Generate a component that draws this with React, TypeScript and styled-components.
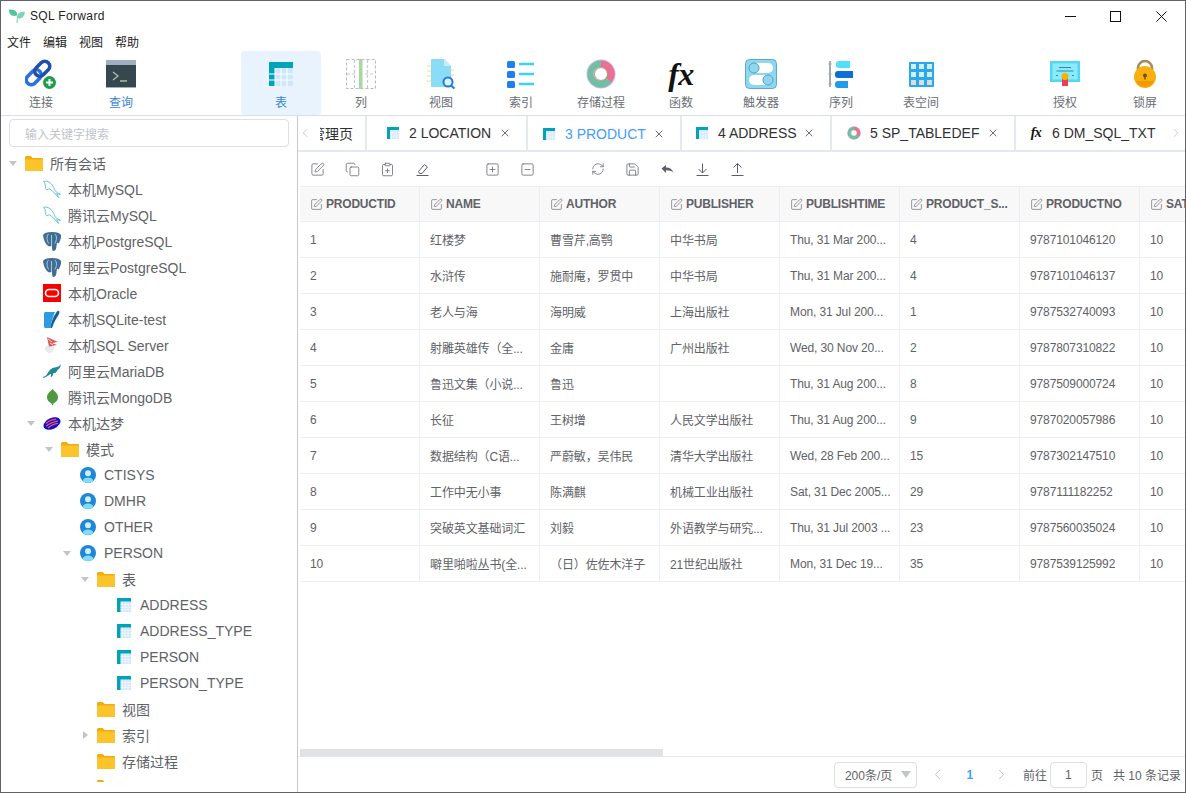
import React from "react";
import styled, { createGlobalStyle } from "styled-components";
import {
  ChevronLeft,
  ChevronRight,
  ClipboardPlus,
  Copy,
  RefreshCw,
  Save,
  SquareMinus,
  SquarePen,
  SquarePlus,
  X,
} from "lucide-react";

const GlobalStyle = createGlobalStyle`
  html, body {
    margin: 0;
    padding: 0;
    background: #fff;
  }
  body {
    font-family: "Liberation Sans", "Noto Sans CJK SC", sans-serif;
  }
  * {
    box-sizing: border-box;
  }
`;

const Window = styled.div`
  width: 1186px;
  height: 793px;
  display: flex;
  flex-direction: column;
  background: #fff;
  border: 1px solid #5f6368;
  overflow: hidden;
`;

const TitleBar = styled.div`
  height: 30px;
  flex: none;
  display: flex;
  align-items: center;
  padding-left: 8px;
`;

const AppName = styled.div`
  margin-left: 5px;
  font-size: 12px;
  letter-spacing: 0.35px;
  color: #222;
`;

const WinControls = styled.div`
  margin-left: auto;
  display: flex;
  height: 100%;
  padding-right: 1px;
`;

const WinButton = styled.div`
  width: 45.5px;
  display: flex;
  align-items: center;
  justify-content: center;
`;

const MenuBar = styled.div`
  height: 20px;
  flex: none;
  display: flex;
  align-items: center;
  gap: 12px;
  padding-left: 6px;
  font-size: 12px;
  color: #222;
`;

const Ribbon = styled.div`
  height: 65px;
  flex: none;
  display: flex;
  border-bottom: 1px solid #dcdfe6;
`;

const RibbonGroup = styled.div<{ $gap?: number }>`
  display: flex;
  margin-left: ${(p) => p.$gap || 0}px;
`;

const RibbonItem = styled.div<{ $active?: boolean; $blue?: boolean }>`
  width: 80px;
  height: 64px;
  display: flex;
  flex-direction: column;
  align-items: center;
  border-radius: 4px;
  padding-top: 7px;
  font-size: 12px;
  color: ${(p) => (p.$active || p.$blue ? "#3a86d0" : "#6a6d73")};
  background: ${(p) => (p.$active ? "#e8f3fd" : "transparent")};
`;

const RibbonIcon = styled.div`
  height: 32px;
  width: 32px;
  display: flex;
  align-items: center;
  justify-content: center;
`;

const RibbonLabel = styled.div`
  margin-top: 5px;
  line-height: 16px;
`;

const FxMark = styled.span<{ $size: number }>`
  font-family: "Liberation Serif", serif;
  font-style: italic;
  font-weight: 700;
  font-size: ${(p) => p.$size}px;
  line-height: 1;
  color: #111;
  letter-spacing: -0.5px;
`;

const Body = styled.div`
  flex: 1;
  min-height: 0;
  display: flex;
`;

const Sidebar = styled.div`
  width: 297px;
  flex: none;
  border-right: 1px solid #c8cacd;
  display: flex;
  flex-direction: column;
`;

const SearchWrap = styled.div`
  padding: 3px 8px 3px 8px;
  flex: none;
`;

const SearchBox = styled.div`
  height: 28px;
  border: 1px solid #dcdfe6;
  border-radius: 4px;
  padding-left: 15px;
  display: flex;
  align-items: center;
  font-size: 12px;
  color: #c0c4cc;
`;

const Tree = styled.div`
  height: 632px;
  flex: none;
  overflow: hidden;
`;

const TreeRow = styled.div<{ $level: number }>`
  height: 26px;
  display: flex;
  align-items: center;
  padding-left: ${(p) => p.$level * 18 + 7}px;
  font-size: 14px;
  color: #606266;
  white-space: nowrap;
`;

const Caret = styled.div<{ $open?: boolean; $show: boolean }>`
  width: 10px;
  height: 10px;
  flex: none;
  margin-right: 7px;
  display: flex;
  align-items: center;
  justify-content: center;
  &::before {
    content: "";
    display: ${(p) => (p.$show ? "block" : "none")};
    border-style: solid;
    border-color: transparent;
    ${(p) =>
      p.$open
        ? "border-width: 5px 4.5px 0 4.5px; border-top-color: #c0c4cc;"
        : "border-width: 4.5px 0 4.5px 5px; border-left-color: #c0c4cc;"}
  }
`;

const TreeIcon = styled.div`
  width: 18px;
  height: 18px;
  flex: none;
  margin-right: 7px;
  display: flex;
  align-items: center;
  justify-content: center;
`;

const Main = styled.div`
  flex: 1;
  min-width: 0;
  display: flex;
  flex-direction: column;
`;

const TabStrip = styled.div`
  height: 36px;
  flex: none;
  display: flex;
  border-bottom: 2px solid #e4e8ef;
`;

const TabArrow = styled.div<{ $w: number }>`
  width: ${(p) => p.$w}px;
  flex: none;
  display: flex;
  align-items: center;
  color: #b4b7bd;
`;

const TabList = styled.div`
  flex: 1;
  min-width: 0;
  display: flex;
  overflow: hidden;
`;

const Tab = styled.div<{ $w: number; $pad?: number; $active?: boolean }>`
  width: ${(p) => p.$w}px;
  height: ${(p) => (p.$active ? 36 : 34)}px;
  flex: none;
  display: flex;
  align-items: center;
  padding-left: ${(p) => p.$pad ?? 15}px;
  border-right: 2px solid #e4e8ef;
  background: #fff;
  font-size: 14px;
  white-space: nowrap;
  color: ${(p) => (p.$active ? "#409eff" : "#303133")};
`;

const ClippedTab = styled(Tab)`
  justify-content: flex-end;
  padding: 0 12px 0 0;
  overflow: hidden;
`;

const TabIcon = styled.div`
  width: 14px;
  margin-right: 9px;
  flex: none;
  display: flex;
  align-items: center;
  justify-content: center;
`;

const TabClose = styled.div`
  margin-left: auto;
  margin-right: 15px;
  display: flex;
  color: #303133;
`;

const Toolbar = styled.div`
  height: 34px;
  flex: none;
  display: flex;
  gap: 35px;
  padding-left: 2px;
`;

const ToolGroup = styled.div`
  display: flex;
`;

const ToolButton = styled.div`
  width: 35px;
  display: flex;
  align-items: center;
  justify-content: center;
  color: #5c5f65;
`;

const TableWrap = styled.div`
  flex: 1;
  min-height: 0;
  overflow: hidden;
  padding-left: 2px;
`;

const Grid = styled.div`
  display: flex;
  flex-direction: column;
  width: max-content;
`;

const Row = styled.div<{ $head?: boolean }>`
  height: 36px;
  display: flex;
  border-bottom: 1px solid #ebeef5;
  background: ${(p) => (p.$head ? "#f8f8f9" : "#fff")};
  border-top: ${(p) => (p.$head ? "1px solid #ebeef5" : "none")};
`;

const Cell = styled.div<{ $head?: boolean }>`
  width: 120px;
  flex: none;
  display: flex;
  align-items: center;
  gap: 3px;
  padding-left: 10px;
  border-right: 1px solid #ebeef5;
  font-size: 12px;
  letter-spacing: ${(p) => (p.$head ? "-0.2px" : "-0.12px")};
  font-weight: ${(p) => (p.$head ? 700 : 400)};
  color: #606266;
  white-space: nowrap;
  overflow: hidden;
`;

const ScrollTrack = styled.div`
  height: 7px;
  flex: none;
  padding-left: 2px;
`;

const ScrollThumb = styled.div`
  width: 363px;
  height: 7px;
  background: #e1e2e4;
`;

const Footer = styled.div`
  height: 36px;
  flex: none;
  border-top: 1px solid #e4e7ed;
  display: flex;
  align-items: center;
  padding-right: 4px;
  justify-content: flex-end;
  font-size: 12px;
  color: #606266;
`;

const PageSize = styled.div`
  width: 83px;
  height: 26px;
  border: 1px solid #dcdfe6;
  border-radius: 4px;
  display: flex;
  align-items: center;
  padding-left: 10px;
  margin-right: 5px;
`;

const SelectCaret = styled.div`
  margin-left: 9px;
  border-style: solid;
  border-width: 7px 5.5px 0 5.5px;
  border-color: #c0c4cc transparent transparent transparent;
`;

const PageArrow = styled.div`
  width: 32px;
  display: flex;
  justify-content: center;
  color: #b4b7bd;
`;

const PageCurrent = styled.div`
  width: 32px;
  text-align: center;
  font-weight: 700;
  color: #409eff;
`;

const PageInput = styled.div`
  width: 37px;
  height: 26px;
  margin: 0 4px 0 3px;
  border: 1px solid #dcdfe6;
  border-radius: 4px;
  display: flex;
  align-items: center;
  justify-content: center;
`;

const FooterText = styled.span<{ $left?: number }>`
  margin-left: ${(p) => p.$left || 0}px;
`;

const Leaf = () => (
  <svg width="16" height="14" viewBox="0 0 16 14">
    <path d="M8 6.500C5.500 7.500 2.500 7 1 5 .2 3.800 0 2 .2 .5 3 .2 6 .8 7.500 3 8 4 8.200 5 8 6.500z" fill="#54c49a" />
    <path d="M8 8c0-3 2.500-5 6-5.200.6 0 1.300 0 1.800.1 0 3.100-1.300 5.600-4 6.300-1 .3-2 .3-3 0L8.600 14H7.400z" fill="#7ed6b5" />
  </svg>
);

const LinkIcon = () => (
  <svg width="32" height="32" viewBox="0 0 32 32">
    <g transform="rotate(-45 13 15)" fill="none" strokeWidth="3.6">
      <rect x="-1.500" y="10" width="17" height="10" rx="5" stroke="#2b6fe0" />
      <rect x="10.500" y="10" width="17" height="10" rx="5" stroke="#1f4fa8" />
    </g>
    <circle cx="24.500" cy="24.500" r="6.500" fill="#1f9d4a" />
    <path d="M24.500 21v7M21 24.500h7" stroke="#fff" strokeWidth="2" />
  </svg>
);

const TerminalIcon = () => (
  <svg width="30" height="28" viewBox="0 0 30 28">
    <rect x="0" y="0" width="30" height="28" fill="#9eb0c0" />
    <rect x="0" y="5" width="30" height="22" fill="#37474f" />
    <path d="M7 12l5 4-5 4" fill="none" stroke="#a9c0a8" strokeWidth="1.300" />
    <path d="M14 21h7" stroke="#a9c0a8" strokeWidth="1.500" />
  </svg>
);

const TableIcon = ({ size }: { size: number }) => (
  <svg width={size} height={size} viewBox="0 0 24 24">
    <rect x="0" y="0" width="24" height="24" fill="#cfe6fb" />
    <path d="M0 0h24v6H6v18H0z" fill="#00a3b8" />
    {size > 18 && (
      <path d="M0 12h6M0 18h6M6 6v18M12 6v18M18 6v18M6 12h18M6 18h18" stroke="#fff" strokeWidth="1" />
    )}
    {size <= 18 && <path d="M9 6v18M14 6v18M19 6v18M6 11h18M6 16h18M6 20h18" stroke="#fff" strokeWidth="1" />}
  </svg>
);

const ColumnIcon = () => (
  <svg width="30" height="30" viewBox="0 0 30 30">
    <rect x=".5" y=".5" width="29" height="29" fill="none" stroke="#b4bcc8" strokeWidth="1.200" strokeDasharray="3 2" />
    <path d="M8.500 1v28M21.500 1v28M1 15h10M19 15h10" stroke="#c4cad3" strokeWidth="1.200" strokeDasharray="3 2" />
    <rect x="13" y="0" width="3.500" height="30" fill="#a8d8a0" />
  </svg>
);

const ViewIcon = () => (
  <svg width="32" height="32" viewBox="0 0 32 32">
    <path d="M2 8h4M2 13h4M2 18h4M2 23h4M26 12h3M26 17h3" stroke="#f7eec4" strokeWidth="2" />
    <path d="M6 1h13l7 7v21H6z" fill="#8bdcf7" />
    <path d="M19 1l7 7h-7z" fill="#c4eefc" />
    <circle cx="23" cy="24" r="4.500" fill="#dff3fc" stroke="#1e80d8" strokeWidth="2" />
    <path d="M26 27.500l3.500 3" stroke="#1e80d8" strokeWidth="2.200" />
  </svg>
);

const IndexIcon = () => (
  <svg width="28" height="28" viewBox="0 0 28 28">
    <rect x="0" y="1" width="8" height="7" rx="1.500" fill="#1e80f0" />
    <rect x="0" y="11" width="8" height="7" rx="1.500" fill="#1e80f0" />
    <rect x="0" y="21" width="8" height="7" rx="1.500" fill="#1e80f0" />
    <path d="M12 4h15M12 14h15M12 24h15" stroke="#3fd0f5" strokeWidth="2.600" />
  </svg>
);

const ProcIcon = ({ size }: { size: number }) => (
  <svg width={size} height={size} viewBox="0 0 30 30">
    <circle cx="15" cy="15" r="14.500" fill="#c8b8d8" />
    <path d="M15 1.500A13.500 13.500 0 0 1 25.500 23.500L20 19A7 7 0 0 0 15 8z" fill="#ec6f95" />
    <path d="M25.500 23.500A13.500 13.500 0 1 1 15 1.500V8A7 7 0 1 0 20 19z" fill="#6fbfa4" />
    <circle cx="15" cy="15" r="6" fill="#fff" />
    <circle cx="15" cy="15" r="6.500" fill="none" stroke="#b8a04a" strokeWidth=".6" />
  </svg>
);

const TriggerIcon = () => (
  <svg width="32" height="30" viewBox="0 0 32 30">
    <rect x=".5" y=".5" width="31" height="29" rx="4" fill="#8fd6ef" stroke="#5aa9d0" />
    <rect x="4" y="4" width="24" height="10" rx="5" fill="#fff" />
    <circle cx="9" cy="9" r="5" fill="#8fd6ef" stroke="#4f9fcb" />
    <rect x="4" y="16" width="24" height="10" rx="5" fill="#fff" />
    <circle cx="23" cy="21" r="5" fill="#8fd6ef" stroke="#4f9fcb" />
  </svg>
);

const SequenceIcon = () => (
  <svg width="26" height="28" viewBox="0 0 26 28">
    <path d="M2 1v26" stroke="#a4aab3" strokeWidth="2" />
    <circle cx="2" cy="4" r="1.500" fill="#a4aab3" />
    <circle cx="2" cy="14" r="1.500" fill="#a4aab3" />
    <circle cx="2" cy="24" r="1.500" fill="#a4aab3" />
    <path d="M8 4a3 3 0 0 1 3-3h11v7H11a3 3 0 0 1-3-3z" fill="#4fe0fa" />
    <path d="M7 14a3 3 0 0 1 3-3h15v7H10a3 3 0 0 1-3-3z" fill="#0a6fd6" />
    <path d="M7 24a3 3 0 0 1 3-3h10v7H10a3 3 0 0 1-3-3z" fill="#1f9de8" />
  </svg>
);

const SpaceIcon = () => (
  <svg width="25" height="25" viewBox="0 0 25 25">
    <rect width="25" height="25" rx="1" fill="#29a8ea" />
    <path d="M2 2h5v5H2zM10 2h5v5h-5zM18 2h5v5h-5zM2 10h5v5H2zM10 10h5v5h-5zM18 10h5v5h-5z" fill="#d3effc" />
    <path d="M2 18h5v5H2zM10 18h5v5h-5zM18 18h5v5h-5z" fill="#dcdcdc" />
  </svg>
);

const GrantIcon = () => (
  <svg width="30" height="26" viewBox="0 0 30 26">
    <rect width="30" height="21" fill="#4fdaf2" />
    <rect x="2.500" y="2.500" width="25" height="16" fill="#8eeafa" />
    <path d="M9 6.500h12M6.500 10h17" stroke="#1e8fc4" strokeWidth="1.200" />
    <rect x="12" y="16" width="6" height="9" fill="#f03a5c" />
    <circle cx="15" cy="15.500" r="3.500" fill="#f5b400" />
    <path d="M6 14.500h2M22 14.500h2" stroke="#1e8fc4" strokeWidth="1.200" />
  </svg>
);

const LockIcon = () => (
  <svg width="24" height="30" viewBox="0 0 24 30">
    <path d="M5 14V9a7 7 0 0 1 14 0v5" fill="none" stroke="#a88a5c" strokeWidth="2.600" />
    <circle cx="12" cy="18" r="11" fill="#f7b010" />
    <path d="M3 22a10 10 0 0 0 18 0z" fill="#ed9a00" />
    <circle cx="12" cy="16.500" r="2" fill="#7a4a00" />
    <path d="M11.300 17h1.400v3.500h-1.400z" fill="#7a4a00" />
  </svg>
);

const Folder = () => (
  <svg width="18" height="15" viewBox="0 0 18 15">
    <path d="M0 1.500C0 .7.700 0 1.500 0h4.300l1.700 2H17c.6 0 1 .4 1 1v11c0 .6-.4 1-1 1H1c-.6 0-1-.4-1-1z" fill="#f6ab0c" />
    <path d="M0 3.500h18V14c0 .6-.4 1-1 1H1c-.6 0-1-.4-1-1z" fill="#fcc42b" />
  </svg>
);

const MysqlIcon = () => (
  <svg width="19" height="19" viewBox="0 0 19 19" fill="none" stroke="#5dc0da" strokeWidth="1">
    <path d="M.5 .8c3.500-.8 6.500 .7 8.500 3 2 2.400 2.700 5 4 7 1 1.600 3 2.700 5.500 3.700-1.700 .1-3 0-4.300-.6.800 1 1.700 2.500 2.200 4-1.700-1.300-3-3.200-4.300-4.600-1.800-2-3.300-3.500-5.400-4.600-1.200.2-2 .8-2.800 1.300C1.500 7.500 3.300 6 2 3z" />
  </svg>
);

const PostgresIcon = () => (
  <svg width="18" height="19" viewBox="0 0 18 19">
    <path d="M0 3C1 1 4 0 9 0s8 1 9 3c.5 3-1 6-2.500 8.500L14 10.500 13.500 14c0 2.500-1 5-3 5-1.200 0-1.500-2-1.500-5-2 .5-3.500 .5-4.500-.5C2.500 11.500 .5 8 0 3z" fill="#3e6d95" />
    <path d="M5.500 2c-2 2-2 6 .2 9.500M12 2c2 2 2 6-.2 9.500M8.500 3v11" stroke="#cfdce8" strokeWidth=".8" fill="none" />
  </svg>
);

const OracleIcon = () => (
  <svg width="18" height="18" viewBox="0 0 18 18">
    <rect width="18" height="18" fill="#f80000" />
    <rect x="2.500" y="5.500" width="13" height="7" rx="3.500" fill="none" stroke="#fff" strokeWidth="1.600" />
  </svg>
);

const SqliteIcon = () => (
  <svg width="18" height="19" viewBox="0 0 18 19">
    <path d="M1 3.500C1 2.700 1.700 2 2.500 2H12C10 7 8 12 7.500 18H2.500C1.700 18 1 17.300 1 16.500z" fill="#2d9be0" />
    <path d="M16 1c1.500 1-1 5-3 8-1.500 2.500-3 6-4 9H7.500C8 13 10 7 13 3c1-1.500 2-2.500 3-2z" fill="#0f5f96" />
  </svg>
);

const MssqlIcon = () => (
  <svg width="18" height="18" viewBox="0 0 18 18">
    <path d="M2 12c0-2 2-2.500 5-2.500s5 1 4 3.500-3 5-5.500 4-3.500-3-3.500-5z" fill="#e8eaec" />
    <path d="M4 1l11 5-6 1 5 2-8 1.500z" fill="#d85a5a" />
    <path d="M5 3l4 3M7 7l3 2" stroke="#fff" strokeWidth=".7" />
  </svg>
);

const MariaIcon = () => (
  <svg width="18" height="14" viewBox="0 0 18 14">
    <path d="M0 13c3-.5 4-2.500 6-6 2-3 5-3.500 8-4 1.500-.3 3-1.300 4-3-.3 3-1.500 5-3.500 6-1 2.500-2.500 3.500-4.500 3.500 0 2-.5 3.500-2.500 3.500 .7-1 .8-2 .3-3.200C5.500 11.500 3 13.500 0 14z" fill="#1f8a94" />
  </svg>
);

const MongoIcon = () => (
  <svg width="11" height="18" viewBox="0 0 12 18">
    <path d="M6 0c2 3 6 5 6 9s-3 6-5 7l-.5 2h-1L5 16c-2-1-5-3-5-7s4-6 6-9z" fill="#4d9a3f" />
  </svg>
);

const DamengIcon = () => (
  <svg width="19" height="15" viewBox="0 0 18 14">
    <g transform="rotate(-25 9 7)">
      <ellipse cx="9" cy="7" rx="9" ry="5.500" fill="#0a10d0" />
      <path d="M3.500 4.500c3-1 8-1 11 .5M2.500 7c3-1 10-1 13 .5M3.500 9.500c3-1 8-1 11 0" stroke="#f2506a" strokeWidth="1.300" fill="none" />
    </g>
  </svg>
);

const UserIcon = () => (
  <svg width="16" height="16" viewBox="0 0 16 16">
    <circle cx="8" cy="8" r="8" fill="#1f86d8" />
    <path d="M2.500 13.800C3.500 11.500 5.500 10.500 8 10.500s4.500 1 5.500 3.300A8 8 0 0 1 8 16a8 8 0 0 1-5.500-2.200z" fill="#7fdcf8" />
    <circle cx="8" cy="6.300" r="3" fill="#cdeefc" />
  </svg>
);

const EraserIcon = () => (
  <svg width="15" height="15" viewBox="0 0 15 15" fill="none" stroke="currentColor" strokeWidth="1">
    <path d="M3.500 9.500L9.500 2.500l3 2.500-5.500 6.500H4.500z" />
    <path d="M1.500 13.500h12" />
  </svg>
);

const UndoIcon = () => (
  <svg width="15" height="15" viewBox="0 0 15 15" fill="currentColor">
    <path d="M1.500 6.500L6 3v2.500c3.800 0 6.300 1.900 7.500 5-1.700-1.500-4-2.200-7.500-2.200V11z" />
  </svg>
);

const DownloadIcon = () => (
  <svg width="15" height="15" viewBox="0 0 15 15" fill="none" stroke="currentColor" strokeWidth="1">
    <path d="M7.500 1.500v9.500M3.500 7l4 4 4-4M1.500 13.500h12" />
  </svg>
);

const UploadIcon = () => (
  <svg width="15" height="15" viewBox="0 0 15 15" fill="none" stroke="currentColor" strokeWidth="1">
    <path d="M7.500 11V1.500M3.500 5.500l4-4 4 4M1.500 13.500h12" />
  </svg>
);

type TreeItem = {
  level: number;
  label: string;
  icon: React.ReactNode;
  caret?: "open" | "closed";
};

const treeItems: TreeItem[] = [
  { level: 0, label: "所有会话", icon: <Folder />, caret: "open" },
  { level: 1, label: "本机MySQL", icon: <MysqlIcon /> },
  { level: 1, label: "腾讯云MySQL", icon: <MysqlIcon /> },
  { level: 1, label: "本机PostgreSQL", icon: <PostgresIcon /> },
  { level: 1, label: "阿里云PostgreSQL", icon: <PostgresIcon /> },
  { level: 1, label: "本机Oracle", icon: <OracleIcon /> },
  { level: 1, label: "本机SQLite-test", icon: <SqliteIcon /> },
  { level: 1, label: "本机SQL Server", icon: <MssqlIcon /> },
  { level: 1, label: "阿里云MariaDB", icon: <MariaIcon /> },
  { level: 1, label: "腾讯云MongoDB", icon: <MongoIcon /> },
  { level: 1, label: "本机达梦", icon: <DamengIcon />, caret: "open" },
  { level: 2, label: "模式", icon: <Folder />, caret: "open" },
  { level: 3, label: "CTISYS", icon: <UserIcon /> },
  { level: 3, label: "DMHR", icon: <UserIcon /> },
  { level: 3, label: "OTHER", icon: <UserIcon /> },
  { level: 3, label: "PERSON", icon: <UserIcon />, caret: "open" },
  { level: 4, label: "表", icon: <Folder />, caret: "open" },
  { level: 5, label: "ADDRESS", icon: <TableIcon size={14} /> },
  { level: 5, label: "ADDRESS_TYPE", icon: <TableIcon size={14} /> },
  { level: 5, label: "PERSON", icon: <TableIcon size={14} /> },
  { level: 5, label: "PERSON_TYPE", icon: <TableIcon size={14} /> },
  { level: 4, label: "视图", icon: <Folder /> },
  { level: 4, label: "索引", icon: <Folder />, caret: "closed" },
  { level: 4, label: "存储过程", icon: <Folder /> },
  { level: 4, label: "", icon: <Folder /> },
];

const columns = [
  "PRODUCTID",
  "NAME",
  "AUTHOR",
  "PUBLISHER",
  "PUBLISHTIME",
  "PRODUCT_S...",
  "PRODUCTNO",
  "SATISFY",
];

const rows = [
  ["1", "红楼梦", "曹雪芹,高鹗", "中华书局", "Thu, 31 Mar 200...", "4", "9787101046120", "10"],
  ["2", "水浒传", "施耐庵，罗贯中", "中华书局", "Thu, 31 Mar 200...", "4", "9787101046137", "10"],
  ["3", "老人与海", "海明威", "上海出版社", "Mon, 31 Jul 200...", "1", "9787532740093", "10"],
  ["4", "射雕英雄传（全...", "金庸", "广州出版社", "Wed, 30 Nov 20...", "2", "9787807310822", "10"],
  ["5", "鲁迅文集（小说...", "鲁迅", "", "Thu, 31 Aug 200...", "8", "9787509000724", "10"],
  ["6", "长征", "王树增", "人民文学出版社", "Thu, 31 Aug 200...", "9", "9787020057986", "10"],
  ["7", "数据结构（C语...", "严蔚敏，吴伟民", "清华大学出版社", "Wed, 28 Feb 200...", "15", "9787302147510", "10"],
  ["8", "工作中无小事", "陈满麒", "机械工业出版社", "Sat, 31 Dec 2005...", "29", "9787111182252", "10"],
  ["9", "突破英文基础词汇", "刘毅", "外语教学与研究...", "Thu, 31 Jul 2003 ...", "23", "9787560035024", "10"],
  ["10", "噼里啪啦丛书(全...", "（日）佐佐木洋子", "21世纪出版社", "Mon, 31 Dec 19...", "35", "9787539125992", "10"],
];

const tabs = [
  { label: "2 LOCATION", w: 161, pad: 19, icon: <TableIcon size={12} /> },
  { label: "3 PRODUCT", w: 154, pad: 14, icon: <TableIcon size={12} />, active: true },
  { label: "4 ADDRESS", w: 150, pad: 13, icon: <TableIcon size={12} /> },
  { label: "5 SP_TABLEDEF", w: 184, pad: 15, icon: <ProcIcon size={14} /> },
  { label: "6 DM_SQL_TXT", w: 170, pad: 13, icon: <FxMark $size={14}>fx</FxMark>, noClose: true },
];

export default function App() {
  return (
    <Window>
      <GlobalStyle />
      <TitleBar>
        <Leaf />
        <AppName>SQL Forward</AppName>
        <WinControls>
          <WinButton>
            <svg width="11" height="11" viewBox="0 0 11 11">
              <path d="M0 5.500h11" stroke="#111" />
            </svg>
          </WinButton>
          <WinButton>
            <svg width="11" height="11" viewBox="0 0 11 11">
              <rect x=".5" y=".5" width="10" height="10" fill="none" stroke="#111" />
            </svg>
          </WinButton>
          <WinButton>
            <svg width="11" height="11" viewBox="0 0 11 11">
              <path d="M.5 .5l10 10M10.500 .5l-10 10" stroke="#111" />
            </svg>
          </WinButton>
        </WinControls>
      </TitleBar>
      <MenuBar>
        <span>文件</span>
        <span>编辑</span>
        <span>视图</span>
        <span>帮助</span>
      </MenuBar>
      <Ribbon>
        <RibbonGroup>
          <RibbonItem>
            <RibbonIcon>
              <LinkIcon />
            </RibbonIcon>
            <RibbonLabel>连接</RibbonLabel>
          </RibbonItem>
          <RibbonItem $blue>
            <RibbonIcon>
              <TerminalIcon />
            </RibbonIcon>
            <RibbonLabel>查询</RibbonLabel>
          </RibbonItem>
        </RibbonGroup>
        <RibbonGroup $gap={80}>
          <RibbonItem $active>
            <RibbonIcon>
              <TableIcon size={24} />
            </RibbonIcon>
            <RibbonLabel>表</RibbonLabel>
          </RibbonItem>
          <RibbonItem>
            <RibbonIcon>
              <ColumnIcon />
            </RibbonIcon>
            <RibbonLabel>列</RibbonLabel>
          </RibbonItem>
          <RibbonItem>
            <RibbonIcon>
              <ViewIcon />
            </RibbonIcon>
            <RibbonLabel>视图</RibbonLabel>
          </RibbonItem>
          <RibbonItem>
            <RibbonIcon>
              <IndexIcon />
            </RibbonIcon>
            <RibbonLabel>索引</RibbonLabel>
          </RibbonItem>
          <RibbonItem>
            <RibbonIcon>
              <ProcIcon size={30} />
            </RibbonIcon>
            <RibbonLabel>存储过程</RibbonLabel>
          </RibbonItem>
          <RibbonItem>
            <RibbonIcon>
              <FxMark $size={32}>fx</FxMark>
            </RibbonIcon>
            <RibbonLabel>函数</RibbonLabel>
          </RibbonItem>
          <RibbonItem>
            <RibbonIcon>
              <TriggerIcon />
            </RibbonIcon>
            <RibbonLabel>触发器</RibbonLabel>
          </RibbonItem>
          <RibbonItem>
            <RibbonIcon>
              <SequenceIcon />
            </RibbonIcon>
            <RibbonLabel>序列</RibbonLabel>
          </RibbonItem>
          <RibbonItem>
            <RibbonIcon>
              <SpaceIcon />
            </RibbonIcon>
            <RibbonLabel>表空间</RibbonLabel>
          </RibbonItem>
        </RibbonGroup>
        <RibbonGroup $gap={64}>
          <RibbonItem>
            <RibbonIcon>
              <GrantIcon />
            </RibbonIcon>
            <RibbonLabel>授权</RibbonLabel>
          </RibbonItem>
          <RibbonItem>
            <RibbonIcon>
              <LockIcon />
            </RibbonIcon>
            <RibbonLabel>锁屏</RibbonLabel>
          </RibbonItem>
        </RibbonGroup>
      </Ribbon>
      <Body>
        <Sidebar>
          <SearchWrap>
            <SearchBox>输入关键字搜索</SearchBox>
          </SearchWrap>
          <Tree>
            {treeItems.map((item, i) => (
              <TreeRow key={i} $level={item.level}>
                <Caret $show={!!item.caret} $open={item.caret === "open"} />
                <TreeIcon>{item.icon}</TreeIcon>
                {item.label}
              </TreeRow>
            ))}
          </Tree>
        </Sidebar>
        <Main>
          <TabStrip>
            <TabArrow $w={22}>
              <ChevronLeft size={14} strokeWidth={1.2} />
            </TabArrow>
            <TabList>
              <ClippedTab $w={47}>管理页</ClippedTab>
              {tabs.map((t) => (
                <Tab key={t.label} $w={t.w} $pad={t.pad} $active={t.active}>
                  <TabIcon>{t.icon}</TabIcon>
                  {t.label}
                  {!t.noClose && (
                    <TabClose>
                      <X size={12} strokeWidth={1.4} />
                    </TabClose>
                  )}
                </Tab>
              ))}
            </TabList>
            <TabArrow $w={16}>
              <ChevronRight size={14} strokeWidth={1.2} />
            </TabArrow>
          </TabStrip>
          <Toolbar>
            <ToolGroup>
              <ToolButton>
                <SquarePen size={15} strokeWidth={1.2} />
              </ToolButton>
              <ToolButton>
                <Copy size={15} strokeWidth={1.2} />
              </ToolButton>
              <ToolButton>
                <ClipboardPlus size={15} strokeWidth={1.2} />
              </ToolButton>
              <ToolButton>
                <EraserIcon />
              </ToolButton>
            </ToolGroup>
            <ToolGroup>
              <ToolButton>
                <SquarePlus size={15} strokeWidth={1.2} />
              </ToolButton>
              <ToolButton>
                <SquareMinus size={15} strokeWidth={1.2} />
              </ToolButton>
            </ToolGroup>
            <ToolGroup>
              <ToolButton>
                <RefreshCw size={14} strokeWidth={1.2} />
              </ToolButton>
              <ToolButton>
                <Save size={15} strokeWidth={1.2} />
              </ToolButton>
              <ToolButton>
                <UndoIcon />
              </ToolButton>
              <ToolButton>
                <DownloadIcon />
              </ToolButton>
              <ToolButton>
                <UploadIcon />
              </ToolButton>
            </ToolGroup>
          </Toolbar>
          <TableWrap>
            <Grid>
              <Row $head>
                {columns.map((c) => (
                  <Cell key={c} $head>
                    <SquarePen size={13} strokeWidth={1.2} />
                    {c}
                  </Cell>
                ))}
              </Row>
              {rows.map((r) => (
                <Row key={r[0]}>
                  {r.map((v, i) => (
                    <Cell key={i}>{v}</Cell>
                  ))}
                </Row>
              ))}
            </Grid>
          </TableWrap>
          <ScrollTrack>
            <ScrollThumb />
          </ScrollTrack>
          <Footer>
            <PageSize>
              200条/页
              <SelectCaret />
            </PageSize>
            <PageArrow>
              <ChevronLeft size={17} strokeWidth={1.2} />
            </PageArrow>
            <PageCurrent>1</PageCurrent>
            <PageArrow>
              <ChevronRight size={17} strokeWidth={1.2} />
            </PageArrow>
            <FooterText $left={5}>前往</FooterText>
            <PageInput>1</PageInput>
            <FooterText>页</FooterText>
            <FooterText $left={10}>共 10 条记录</FooterText>
          </Footer>
        </Main>
      </Body>
    </Window>
  );
}
